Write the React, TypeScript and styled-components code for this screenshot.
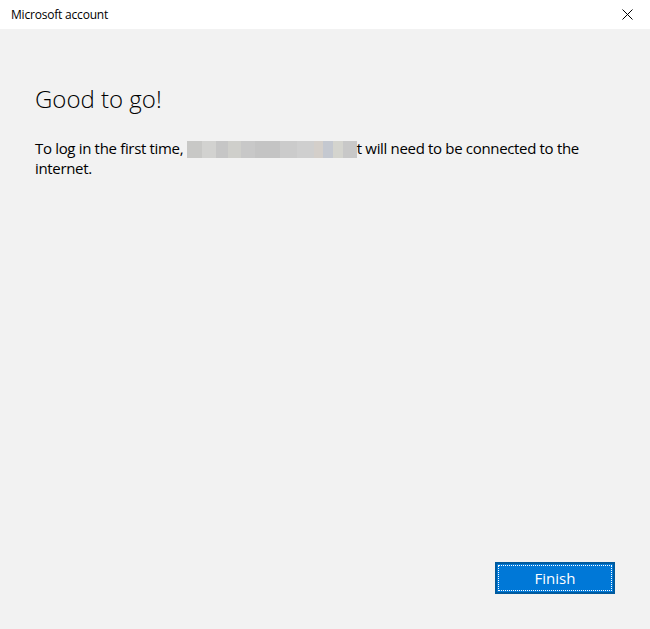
import styled, { createGlobalStyle } from 'styled-components';

const GlobalStyle = createGlobalStyle`
  html, body {
    margin: 0;
    padding: 0;
    background: #f2f2f2;
  }
  body {
    font-family: "Segoe UI", "Open Sans", "Liberation Sans", sans-serif;
    color: #000;
  }
`;

const Window = styled.div`
  display: flex;
  flex-direction: column;
  width: 650px;
  height: 629px;
  background: #f2f2f2;
`;

const TitleBar = styled.header`
  display: flex;
  align-items: center;
  justify-content: space-between;
  height: 29px;
  padding: 0 0 0 11px;
  background: #fff;
  font-size: 12px;
  letter-spacing: -0.2px;
  color: #000;
`;

const CloseButton = styled.button`
  display: flex;
  align-items: center;
  justify-content: center;
  width: 46px;
  height: 29px;
  padding: 0;
  border: none;
  background: transparent;
`;

const Content = styled.main`
  flex: 1;
  padding: 53px 35px 0;
`;

const Heading = styled.h1`
  margin: 0 0 22px;
  font-size: 24px;
  font-weight: 300;
  line-height: 34px;
`;

const Body = styled.p`
  margin: 0;
  font-size: 15px;
  line-height: 20px;
  letter-spacing: -0.33px;
`;

const Blurred = styled.span`
  display: inline-block;
  width: 170px;
  height: 17px;
  vertical-align: -4px;
  background: linear-gradient(
    90deg,
    #c8c8c6 0 9%,
    #d2d2d0 9% 17%,
    #c6c6c6 17% 24%,
    #cfcfcb 24% 32%,
    #c8c8c8 32% 40%,
    #c4c4c4 40% 55%,
    #cbcbcb 55% 65%,
    #cfcfcf 65% 75%,
    #d4cfca 75% 80%,
    #c4c8d0 80% 86%,
    #d4d4ce 86% 92%,
    #c8c8c8 92% 100%
  );
`;

const Footer = styled.footer`
  display: flex;
  justify-content: flex-end;
  padding: 0 35px 35px;
`;

const FinishButton = styled.button`
  position: relative;
  width: 120px;
  height: 32px;
  border: 2px solid #005a9e;
  background: #0078d7;
  color: #fff;
  font-family: inherit;
  font-size: 15px;
  padding: 0 0 1px;

  &::after {
    content: '';
    position: absolute;
    inset: 1px;
    border: 1px dotted #fff;
  }
`;

export default function App() {
  return (
    <Window>
      <GlobalStyle />
      <TitleBar>
        <span>Microsoft account</span>
        <CloseButton aria-label="Close">
          <svg width="11" height="11" viewBox="0 0 11 11">
            <path d="M0.5 0.5 L10.5 10.5 M10.5 0.5 L0.5 10.5" stroke="#000" strokeWidth="1" />
          </svg>
        </CloseButton>
      </TitleBar>
      <Content>
        <Heading>Good to go!</Heading>
        <Body>
          To log in the first time, <Blurred />t will need to be connected to the internet.
        </Body>
      </Content>
      <Footer>
        <FinishButton>Finish</FinishButton>
      </Footer>
    </Window>
  );
}
